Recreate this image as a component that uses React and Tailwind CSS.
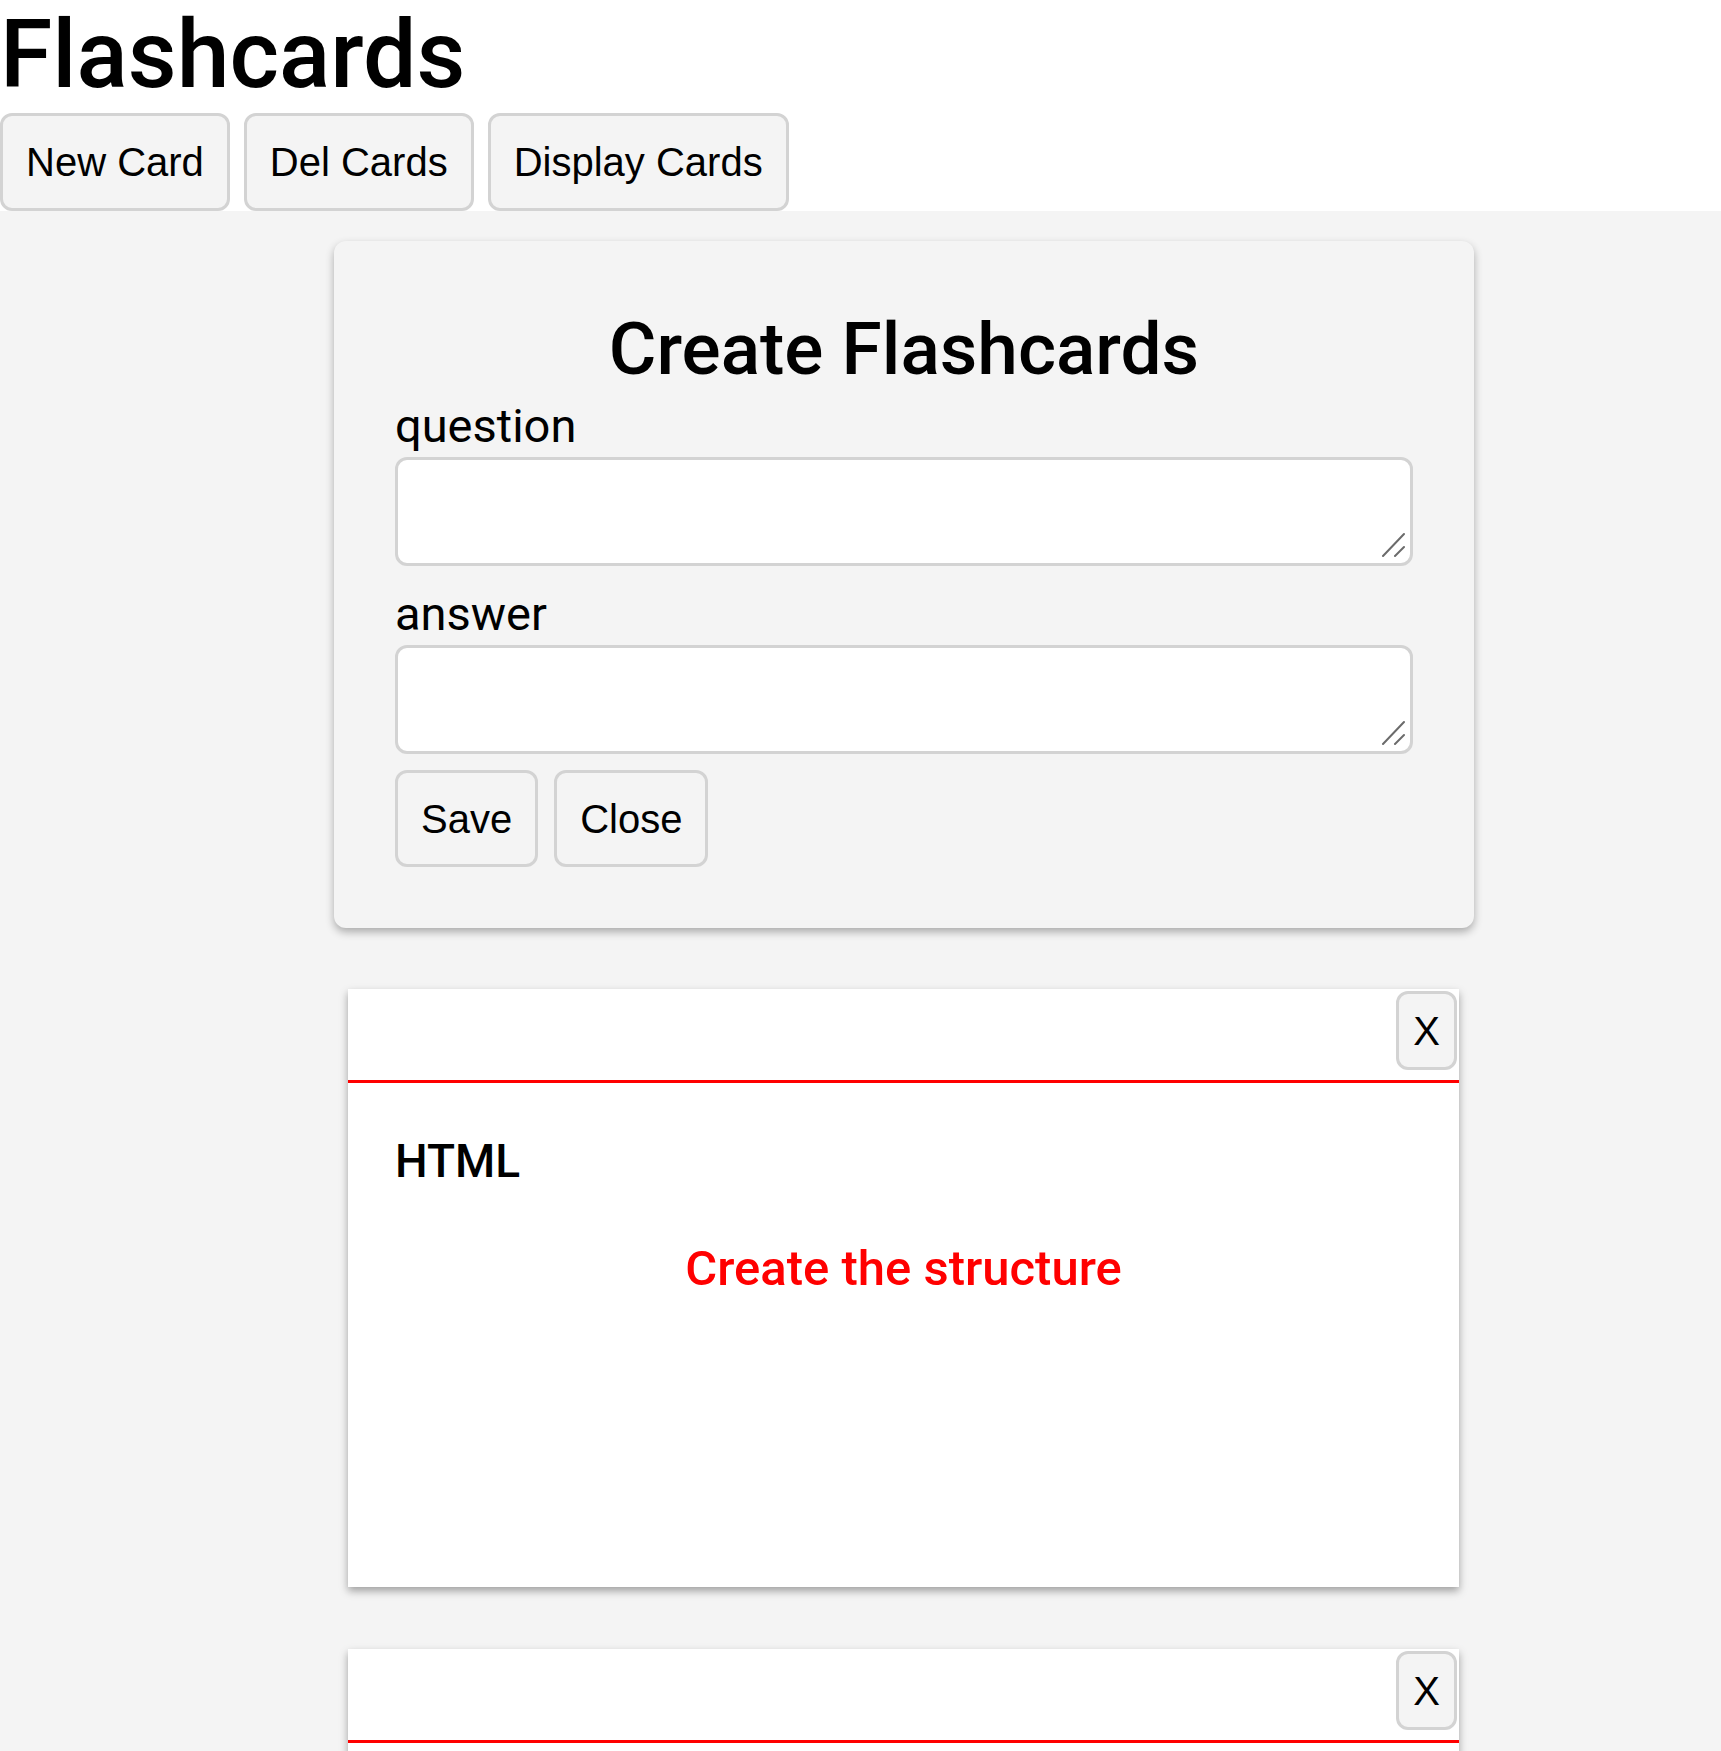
import React from "react";

const btn =
  "px-[23px] bg-[#f4f4f4] border-[3px] border-[#d3d3d3] rounded-[12px] text-[40px] text-black font-['Liberation_Sans',Arial,sans-serif]";

// textarea with the big grip drawn in the lower-right corner
function Field() {
  return (
    <div className="relative">
      <textarea className="block w-full h-[109px] bg-white border-[3px] border-[#d3d3d3] rounded-[12px] resize-none" />
      <svg className="absolute right-[8px] bottom-[8px] w-[24px] h-[26px]" viewBox="0 0 24 26">
        <path d="M2 24 L23 2" stroke="#6b6b6b" strokeWidth="2" strokeLinecap="round" />
        <path d="M14 24 L23 15" stroke="#6b6b6b" strokeWidth="2" strokeLinecap="round" />
      </svg>
    </div>
  );
}

function Flashcard({ question, answer }) {
  return (
    <div className="ml-[348px] w-[1111px] h-[598px] bg-white shadow-[0_4px_8px_rgba(0,0,0,0.35)] mb-[62px] shrink-0">
      {/* Card header */}
      <div className="h-[94px] border-b-[3px] border-[#ff0000] flex justify-end items-start pt-[2px] pr-[2px]">
        <button className="h-[79px] px-[14px] bg-[#f4f4f4] border-[3px] border-[#d3d3d3] rounded-[12px] text-[40px] text-black font-['Liberation_Sans',Arial,sans-serif]">
          X
        </button>
      </div>
      <div className="px-[47px]">
        <h3 className="mt-[47px] text-[46px] leading-[62px] font-medium">{question}</h3>
        <p className="mt-[46px] text-center text-[#ff0000] text-[49px] leading-[62px] font-medium">{answer}</p>
      </div>
    </div>
  );
}

export default function App() {
  return (
    <div className="min-h-[1751px] bg-[#f4f4f4] font-['Roboto',sans-serif] text-black overflow-hidden">
      {/* Header */}
      <header className="bg-white">
        <h1 className="text-[95px] leading-[109px] font-medium mb-[4px]">Flashcards</h1>
        <div className="flex gap-[14px]">
          <button className={`${btn} h-[98px]`}>New Card</button>
          <button className={`${btn} h-[98px]`}>Del Cards</button>
          <button className={`${btn} h-[98px]`}>Display Cards</button>
        </div>
      </header>

      <main className="pt-[30px] flex flex-col">
        {/* Create form */}
        <div className="ml-[334px] w-[1140px] bg-[#f4f4f4] rounded-[12px] shadow-[0_4px_8px_rgba(0,0,0,0.3)] px-[61px] pt-[63px] pb-[61px] mb-[61px]">
          <h2 className="text-center text-[73px] leading-[90px] font-medium">Create Flashcards</h2>
          <label className="block text-[47px] leading-[63px]">question</label>
          <div className="mb-[16px]">
            <Field />
          </div>
          <label className="block text-[47px] leading-[63px]">answer</label>
          <Field />
          <div className="flex gap-[16px] mt-[16px]">
            <button className={`${btn} h-[97px]`}>Save</button>
            <button className={`${btn} h-[97px]`}>Close</button>
          </div>
        </div>

        <Flashcard question="HTML" answer="Create the structure" />
        <Flashcard question="CSS" answer="Style the page" />
      </main>
    </div>
  );
}
